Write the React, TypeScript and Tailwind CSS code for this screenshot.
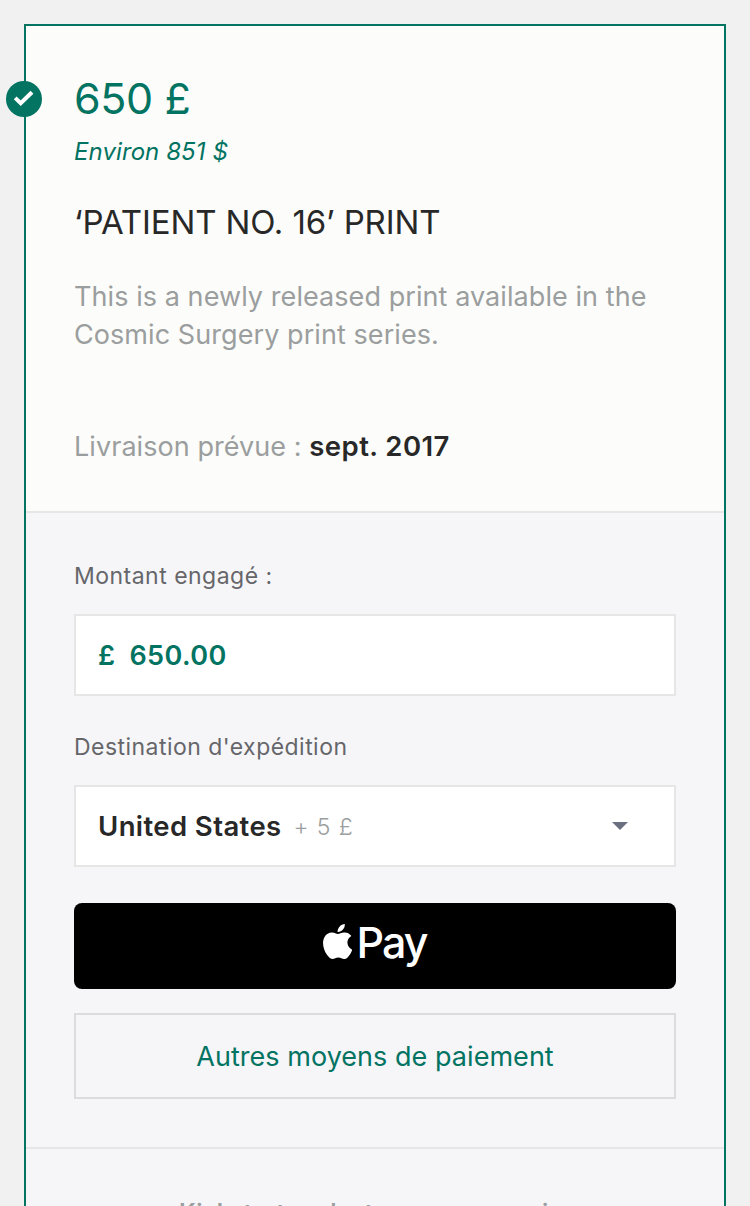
import React from "react";

function CheckBadge() {
  return (
    <span className="absolute -left-5 top-[55px] flex size-9 items-center justify-center rounded-full bg-[#037362]">
      <svg viewBox="0 0 36 36" className="size-9" aria-hidden="true">
        <path d="M9.2 16.9l5.5 5.4L26 11.2" fill="none" stroke="#fff" strokeWidth="4" />
      </svg>
    </span>
  );
}

function AppleLogo() {
  return (
    <svg viewBox="2.2 0 19.4 24" className="h-[35px] w-[29px]" preserveAspectRatio="none" fill="#fff" aria-hidden="true">
      <path d="M12.152 6.896c-.948 0-2.415-1.078-3.96-1.04-2.04.027-3.91 1.183-4.961 3.014-2.117 3.675-.546 9.103 1.519 12.09 1.013 1.454 2.208 3.09 3.792 3.039 1.52-.065 2.09-.987 3.935-.987 1.831 0 2.35.987 3.96.948 1.637-.026 2.676-1.48 3.676-2.948 1.156-1.688 1.636-3.325 1.662-3.415-.039-.013-3.182-1.221-3.22-4.857-.026-3.04 2.48-4.494 2.597-4.559-1.429-2.09-3.623-2.324-4.39-2.376-2-.156-3.675 1.09-4.61 1.09zM15.53 3.83c.843-1.012 1.4-2.427 1.245-3.83-1.207.052-2.662.805-3.532 1.818-.78.896-1.454 2.338-1.273 3.714 1.338.104 2.715-.688 3.559-1.701" />
    </svg>
  );
}

export default function App() {
  return (
    <div className="h-[1206px] overflow-hidden bg-[#f1f1f1] px-6 pt-6 font-['Inter',sans-serif] whitespace-nowrap">
      <article className="relative h-[1300px] border-2 border-[#037362] bg-[#f6f6f9]">
        <CheckBadge />
        <header className="h-[487px] border-b-2 border-[#e6e6e6] bg-[#fcfcfa] px-12 pt-[46px]">
          <h2 className="text-[43px] leading-[52px] tracking-[-0.4px] text-[#037362]">650 £</h2>
          <p className="mt-3 text-[24px] leading-[32px] tracking-[0.08px] text-[#037362] italic">Environ 851 $</p>
          <h3 className="mt-[33px] text-[33px] leading-[42px] tracking-[-0.13px] text-[#282828]">‘PATIENT NO. 16’ PRINT</h3>
          <p className="mt-[35px] text-[27px] leading-[38px] tracking-[0.07px] text-[#9b9e9e]">
            This is a newly released print available in the
            <br />
            Cosmic Surgery print series.
          </p>
          <p className="mt-[73px] text-[27px] leading-[38px] tracking-[0.06px] text-[#9b9e9e]">
            Livraison prévue : <b className="text-[27.5px] font-semibold tracking-[0.45px] text-[#282828]">sept. 2017</b>
          </p>
        </header>
        <section className="flex h-[636px] flex-col border-b-2 border-[#e6e6e6] px-12 pt-[47px]">
          <label className="text-[23px] leading-[32px] tracking-[0.48px] text-[#66666a]">Montant engagé :</label>
          <div className="mt-[22px] flex h-[82px] items-center border-2 border-[#e6e6e6] bg-white px-[22px] pt-0.5 text-[27px] font-semibold tracking-[0.4px] text-[#037362]">
            <span>£</span>
            <span className="ml-[14px]">650.00</span>
          </div>
          <label className="mt-[35px] text-[23px] leading-[32px] tracking-[0.46px] text-[#66666a]">Destination d'expédition</label>
          <div className="mt-[22px] flex h-[82px] items-center border-2 border-[#e6e6e6] bg-white pr-[46px] pl-[22px]">
            <span className="pt-0.5 text-[27.5px] font-semibold tracking-[0.4px] text-[#282828]">United States</span>
            <span className="ml-[12px] pt-0.5 text-[23px] font-light tracking-[0.9px] text-[#9b9e9e]">+ 5 £</span>
            <svg viewBox="0 0 16 8" className="ml-auto h-2 w-4" aria-hidden="true">
              <path d="M0 0h16L8 8z" fill="#6b7080" />
            </svg>
          </div>
          <button className="mt-9 flex h-[86px] items-center justify-center gap-[5px] rounded-[8px] bg-black pr-px pb-[9px] text-white">
            <AppleLogo />
            <span className="text-[43px] leading-[52px] font-medium tracking-[-2px]">Pay</span>
          </button>
          <button className="mt-6 h-[86px] border-2 border-[#dcdcdf] pt-0.5 text-[27px] tracking-[0.04px] text-[#037362]">Autres moyens de paiement</button>
        </section>
        <p className="pt-[48px] text-center text-[24px] leading-[32px] font-semibold tracking-[0.13px] text-[#9b9e9e]">Kickstarter n'est pas un magasin.</p>
      </article>
    </div>
  );
}
